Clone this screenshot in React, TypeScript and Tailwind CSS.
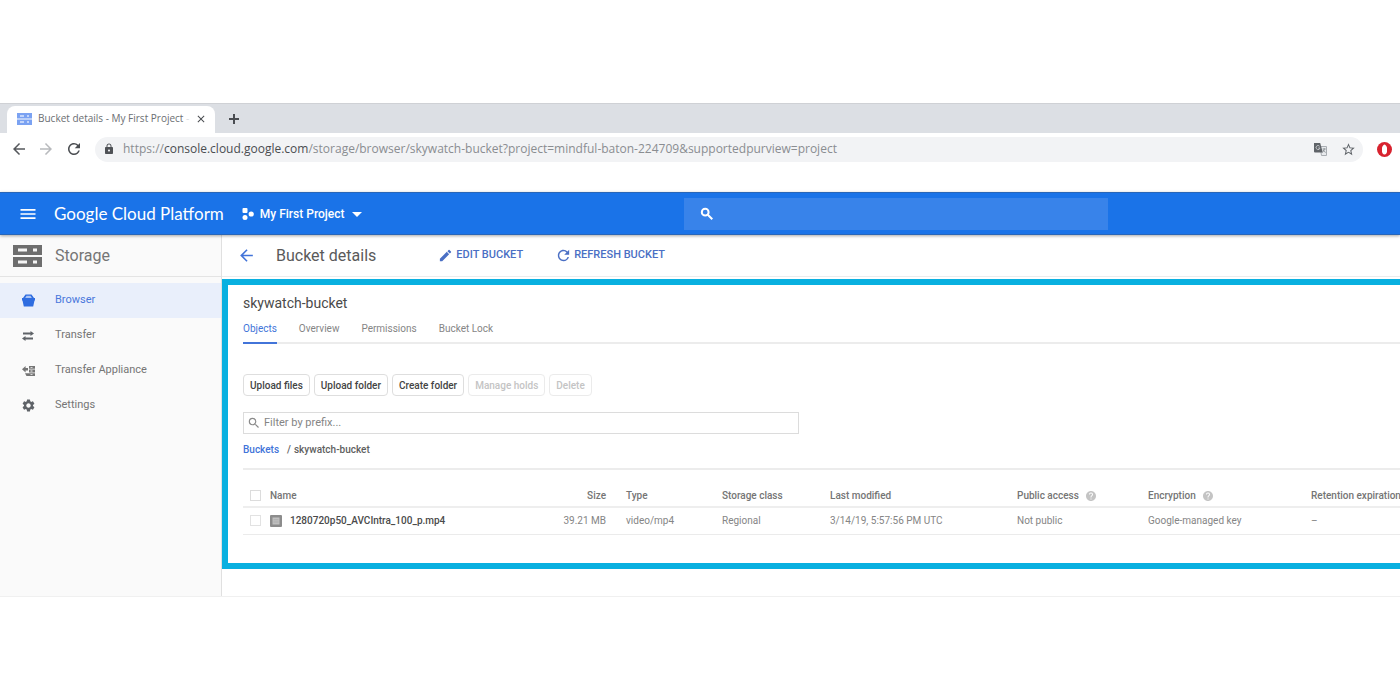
import type { ReactNode } from 'react';
import {
  MdArrowBack,
  MdArrowDropDown,
  MdArrowForward,
  MdClose,
  MdEdit,
  MdHelp,
  MdLock,
  MdMenu,
  MdRefresh,
  MdSearch,
  MdSettings,
  MdStarBorder,
} from 'react-icons/md';

const tabs = ['Objects', 'Overview', 'Permissions', 'Bucket Lock'];

const actions = [
  { label: 'Upload files', disabled: false },
  { label: 'Upload folder', disabled: false },
  { label: 'Create folder', disabled: false },
  { label: 'Manage holds', disabled: true },
  { label: 'Delete', disabled: true },
];

const objects = [
  {
    name: '1280720p50_AVCIntra_100_p.mp4',
    size: '39.21 MB',
    type: 'video/mp4',
    storageClass: 'Regional',
    modified: '3/14/19, 5:57:56 PM UTC',
    access: 'Not public',
    encryption: 'Google-managed key',
    retention: '–',
  },
];

function StorageLogo() {
  return (
    <svg width="29" height="22" viewBox="0 0 29 22" aria-hidden="true">
      <path fill="#6e6e6e" d="M0 0h29v10H0zM0 12h29v10H0z" />
      <path fill="#f5f5f5" d="M5 3.500h9v3H5zM5 15.500h9v3H5zM20 3.500h4v3h-4zM20 15.500h4v3h-4z" />
    </svg>
  );
}

function Favicon() {
  return (
    <svg width="15" height="12" viewBox="0 0 15 12" className="shrink-0" aria-hidden="true">
      <path fill="#7ba2f2" d="M0 0h15v5.500H0zM0 6.500h15V12H0z" />
      <path fill="#c3d5fa" d="M3 2h4v2H3zM3 8h4v2H3zM10 2h2v2h-2zM10 8h2v2h-2z" />
    </svg>
  );
}

function PlusIcon() {
  return (
    <svg width="16" height="16" viewBox="0 0 16 16" stroke="currentColor" strokeWidth="2" aria-hidden="true">
      <path d="M8 3v10M3 8h10" />
    </svg>
  );
}

function BoldSearchIcon() {
  return (
    <svg width="16" height="16" viewBox="0 0 16 16" fill="none" stroke="currentColor" strokeWidth="2" aria-hidden="true">
      <circle cx="6.200" cy="6.200" r="3.400" />
      <path d="M8.800 8.800L13.300 13.300" />
    </svg>
  );
}

function ProjectIcon() {
  return (
    <svg width="12" height="12" viewBox="0 0 12 12" fill="#fff" aria-hidden="true">
      <rect x="0.500" y="0" width="5" height="5" rx="1" />
      <circle cx="9.200" cy="6" r="2.600" />
      <circle cx="3" cy="9.400" r="2.500" />
    </svg>
  );
}

function BucketIcon() {
  return (
    <svg width="13" height="13" viewBox="0 0 13 13" aria-hidden="true">
      <path fill="#2f6de0" d="M3.500 0.500h6L12 4h1v2.500h-.5L11.200 12.500H1.800L.5 6.500H0V4h1z" />
      <path fill="#a9c3f5" d="M4.500 1.800h4L9.800 4H3.200z" />
    </svg>
  );
}

function TransferIcon() {
  return (
    <svg width="12" height="12" viewBox="0 0 12 12" fill="#5f6368" aria-hidden="true">
      <path d="M1 2.500h7.500V1L12 3.500 8.500 6V4.500H1zM11 7.500H3.500V6L0 8.500 3.500 11V9.500H11z" />
    </svg>
  );
}

function ApplianceIcon() {
  return (
    <svg width="13" height="12" viewBox="0 0 13 12" fill="#757575" aria-hidden="true">
      <path d="M0 4.200L3.600 1v2H6v2.400H3.600v2zM7 1h6v2.800H7zM7 4.600h6v2.800H7zM3 8.200h10V11H4.500z" />
      <path fill="#fafafa" d="M8.500 2h2v.8h-2zM8.500 5.600h2v.8h-2zM8.500 9.200h2v.8h-2z" />
    </svg>
  );
}

function TranslateIcon() {
  return (
    <svg width="13" height="13" viewBox="0 0 13 13" aria-hidden="true">
      <path fill="#e8eaed" stroke="#a9adb2" d="M6 3.500h6.500v9H7.500z" />
      <path fill="#5f6368" d="M0 0h6.200l2.600 9.600H1A1 1 0 0 1 0 8.600z" />
      <path fill="none" stroke="#d5d7da" strokeWidth=".8" d="M5.600 3.300A2 2 0 1 0 6 5H4.200" />
      <path
        fill="none"
        stroke="#80868b"
        strokeWidth=".8"
        d="M8.600 6h3.200M10.200 5.200V6c0 1.500-.8 2.500-1.600 3.200M9.300 7c.5 1.200 1.300 2 2.400 2.400"
      />
    </svg>
  );
}

function BlockerIcon() {
  return (
    <svg width="15" height="15" viewBox="0 0 15 15" aria-hidden="true">
      <circle cx="7.500" cy="7.500" r="7.500" fill="#d8232f" />
      <path
        fill="#fff"
        d="M5 6C5 4.300 6.200 3 7.500 2.400 8.800 3 10 4.300 10 6v3.200c0 1.800-1 3.200-2.500 3.200S5 11 5 9.200z"
      />
    </svg>
  );
}

function FileIcon() {
  return (
    <svg width="12" height="12" viewBox="0 0 12 12" className="shrink-0" aria-hidden="true">
      <rect width="12" height="12" rx="1" fill="#8c8c8c" />
      <path fill="#c0c0c0" d="M2.500 2.500h7v7h-7z" />
      <path fill="#adadad" d="M3.500 4.200h5v1h-5zM3.500 6.600h5v1h-5z" />
    </svg>
  );
}

function BrowserChrome() {
  return (
    <div className="font-['Open_Sans',sans-serif]">
      <div className="flex h-[30px] items-end border-t border-[#cfd1d5] bg-[#dcdfe4] pl-[7px]">
        <div className="flex h-[27px] w-[208px] items-center rounded-t-lg bg-white pb-[2px] pl-[10px] pr-[8px]">
          <Favicon />
          <span className="ml-[6px] flex-1 overflow-hidden whitespace-nowrap text-[10px] text-[#6b6e72]">
            Bucket details - My First Project <span className="text-[#dadce0]">-</span>
          </span>
          <button type="button" aria-label="Close tab" className="text-[#4a4d51]">
            <MdClose size={12} />
          </button>
        </div>
        <button
          type="button"
          aria-label="New tab"
          className="flex h-[27px] items-center pb-[2px] pl-[11px] text-[#4a4d51]"
        >
          <PlusIcon />
        </button>
      </div>
      <div className="flex h-8 items-center bg-white pl-[10px] pr-2">
        <button type="button" aria-label="Back" className="text-[#55585c]">
          <MdArrowBack size={18} />
        </button>
        <button type="button" aria-label="Forward" className="ml-[9px] text-[#b8babd]">
          <MdArrowForward size={18} />
        </button>
        <button type="button" aria-label="Reload" className="ml-[10px] text-[#4a4d51]">
          <MdRefresh size={18} />
        </button>
        <div className="ml-3 flex h-[25px] flex-1 items-center rounded-full bg-[#f2f3f5] pl-2 pr-[7px]">
          <MdLock size={12} className="text-[#4f5256]" />
          <p className="ml-2 flex-1 text-[12px] text-[#8a8d91]">
            https://<span className="text-[#4a4d51]">console.cloud.google.com</span>
            /storage/browser/skywatch-bucket?project=mindful-baton-224709&amp;supportedpurview=project
          </p>
          <TranslateIcon />
          <MdStarBorder size={15} className="ml-[14px] text-[#5f6368]" />
        </div>
        <span className="ml-[14px]">
          <BlockerIcon />
        </span>
      </div>
    </div>
  );
}

function PlatformBar() {
  return (
    <header className="relative grid h-[43px] grid-cols-[684fr_424fr_292fr] items-center border-y border-[#2866b8] bg-[#1a73e8] text-white shadow-[0_1px_3px_rgba(0,0,0,0.35)]">
      <div className="flex items-center pl-[18px]">
        <button type="button" aria-label="Navigation menu">
          <MdMenu size={20} />
        </button>
        <a href="#home" className="ml-4 whitespace-nowrap font-[Lato,sans-serif] text-[17px]">
          Google Cloud Platform
        </a>
        <button type="button" className="ml-[18px] flex items-center whitespace-nowrap text-[12px] font-medium">
          <ProjectIcon />
          <span className="ml-[6px]">My First Project</span>
          <MdArrowDropDown size={24} />
        </button>
      </div>
      <label className="flex h-8 items-center bg-[#3883ea] pl-[15px]">
        <BoldSearchIcon />
        <input
          type="search"
          aria-label="Search"
          className="ml-2 min-w-0 flex-1 bg-transparent text-[12px] outline-none"
        />
      </label>
    </header>
  );
}

function NavItem({ icon, label, active }: { icon: ReactNode; label: string; active?: boolean }) {
  return (
    <a
      href={`#${label}`}
      className={`flex h-[35px] items-center pl-[21px] text-[11px] ${
        active ? 'bg-[#e9effb] text-[#4a78dc]' : 'text-[#757575]'
      }`}
    >
      <span className="flex w-[14px] justify-center">{icon}</span>
      <span className="ml-5">{label}</span>
    </a>
  );
}

function Sidebar() {
  return (
    <aside className="w-[222px] shrink-0 border-r border-[#e0e0e0] bg-[#fafafa]">
      <div className="flex h-[42px] items-center border-b border-[#e4e4e4] pl-[13px]">
        <StorageLogo />
        <h2 className="ml-[13px] text-[16px] text-[#757575]">Storage</h2>
      </div>
      <nav className="pt-[6px]">
        <NavItem icon={<BucketIcon />} label="Browser" active />
        <NavItem icon={<TransferIcon />} label="Transfer" />
        <NavItem icon={<ApplianceIcon />} label="Transfer Appliance" />
        <NavItem icon={<MdSettings size={15} className="shrink-0 text-[#5f6368]" />} label="Settings" />
      </nav>
    </aside>
  );
}

function ObjectTable() {
  const head = 'p-0 text-left font-medium';
  return (
    <table className="w-full table-fixed whitespace-nowrap border-t-2 border-[#ececec] text-[10px] text-[#858585]">
      <colgroup>
        <col className="w-[27px]" />
        <col />
        <col className="w-[60px]" />
        <col className="w-[116px]" />
        <col className="w-[108px]" />
        <col className="w-[187px]" />
        <col className="w-[131px]" />
        <col className="w-[163px]" />
        <col className="w-[89px]" />
      </colgroup>
      <thead className="text-[#757575]">
        <tr className="h-[38px] border-b-2 border-[#eeeeee] align-bottom [&>th]:pb-[3px]">
          <th className={`${head} pl-[7px]`}>
            <span className="flex h-[15px] items-center">
              <input
                type="checkbox"
                aria-label="Select all"
                className="block size-[11px] appearance-none border border-[#dcdcdc]"
              />
            </span>
          </th>
          <th className={head}>Name</th>
          <th className="p-0 text-right font-medium">Size</th>
          <th className={`${head} pl-5`}>Type</th>
          <th className={head}>Storage class</th>
          <th className={head}>Last modified</th>
          <th className={head}>
            <span className="flex items-center gap-[6px]">
              Public access <MdHelp size={12} className="text-[#c4c4c4]" />
            </span>
          </th>
          <th className={head}>
            <span className="flex items-center gap-[6px]">
              Encryption <MdHelp size={12} className="text-[#c4c4c4]" />
            </span>
          </th>
          <th className={head}>Retention expiration</th>
        </tr>
      </thead>
      <tbody>
        {objects.map((o) => (
          <tr key={o.name} className="h-[27px] border-b border-[#ebebeb]">
            <td className="p-0 pl-[7px]">
              <input
                type="checkbox"
                aria-label={`Select ${o.name}`}
                className="block size-[11px] appearance-none border border-[#e2e2e2]"
              />
            </td>
            <td className="p-0">
              <a href="#object" className="flex items-center gap-2 font-medium text-[#4a4a4a]">
                <FileIcon />
                {o.name}
              </a>
            </td>
            <td className="p-0 text-right">{o.size}</td>
            <td className="p-0 pl-5">{o.type}</td>
            <td className="p-0">{o.storageClass}</td>
            <td className="p-0">{o.modified}</td>
            <td className="p-0">{o.access}</td>
            <td className="p-0">{o.encryption}</td>
            <td className="p-0">{o.retention}</td>
          </tr>
        ))}
      </tbody>
    </table>
  );
}

function BucketPanel() {
  return (
    <section className="mt-[2px] min-h-[290px] border-6 border-r-0 border-[#09b0e0] pl-[15px] pt-[3px]">
      <h2 className="text-[14px] leading-[30px] text-[#4a4a4a]">skywatch-bucket</h2>
      <div className="flex h-[26px] gap-[22px] border-b-2 border-[#ececec] text-[10px] text-[#858585]">
        {tabs.map((tab, i) => (
          <button
            key={tab}
            type="button"
            className={i === 0 ? '-mb-[2px] border-b-2 border-[#4274d9] pb-1 text-[#4274d9]' : 'pb-1'}
          >
            {tab}
          </button>
        ))}
      </div>

      <div className="mt-[30px] flex gap-1 text-[10px] font-medium text-[#444444]">
        {actions.map((action) => (
          <button
            key={action.label}
            type="button"
            disabled={action.disabled}
            className="h-[22px] rounded-sm border border-[#dedede] px-[6px] disabled:border-[#ebebeb] disabled:text-[#c4c4c4]"
          >
            {action.label}
          </button>
        ))}
      </div>

      <label className="mt-4 flex h-[22px] w-full max-w-[556px] items-center border border-[#dcdcdc] pl-[3px]">
        <MdSearch size={14} className="text-[#8a8a8a]" />
        <input
          type="text"
          aria-label="Filter by prefix"
          placeholder="Filter by prefix..."
          className="ml-[3px] flex-1 bg-transparent text-[11px] outline-none placeholder:text-[#858585]"
        />
      </label>

      <p className="mb-[10px] mt-2 flex gap-[3px] text-[10px] font-medium leading-4 text-[#5f5f5f]">
        <a href="#buckets" className="mr-[5px] text-[#4274d9]">
          Buckets
        </a>
        <span>/</span>
        <span>skywatch-bucket</span>
      </p>

      <ObjectTable />
    </section>
  );
}

export default function App() {
  return (
    <div className="flex min-h-screen flex-col justify-center overflow-hidden bg-white font-[Roboto,sans-serif]">
      <BrowserChrome />
      <div className="h-[27px]" />
      <PlatformBar />
      <div className="flex min-h-[362px] border-b border-[#f0f0f0]">
        <Sidebar />
        <main className="min-w-0 flex-1">
          <div className="flex h-[42px] items-center border-b border-[#ececec] pl-[15px]">
            <button type="button" aria-label="Back to buckets" className="text-[#4274d9]">
              <MdArrowBack size={19} />
            </button>
            <h1 className="ml-5 text-[16px] text-[#5a5a5a]">Bucket details</h1>
            <button
              type="button"
              className="ml-[62px] flex items-center gap-[3px] text-[11px] font-medium text-[#4a6fc4]"
            >
              <MdEdit size={15} />
              EDIT BUCKET
            </button>
            <button
              type="button"
              className="ml-8 flex items-center gap-[2px] text-[11px] font-medium text-[#4a6fc4]"
            >
              <MdRefresh size={17} />
              REFRESH BUCKET
            </button>
          </div>
          <BucketPanel />
        </main>
      </div>
    </div>
  );
}
